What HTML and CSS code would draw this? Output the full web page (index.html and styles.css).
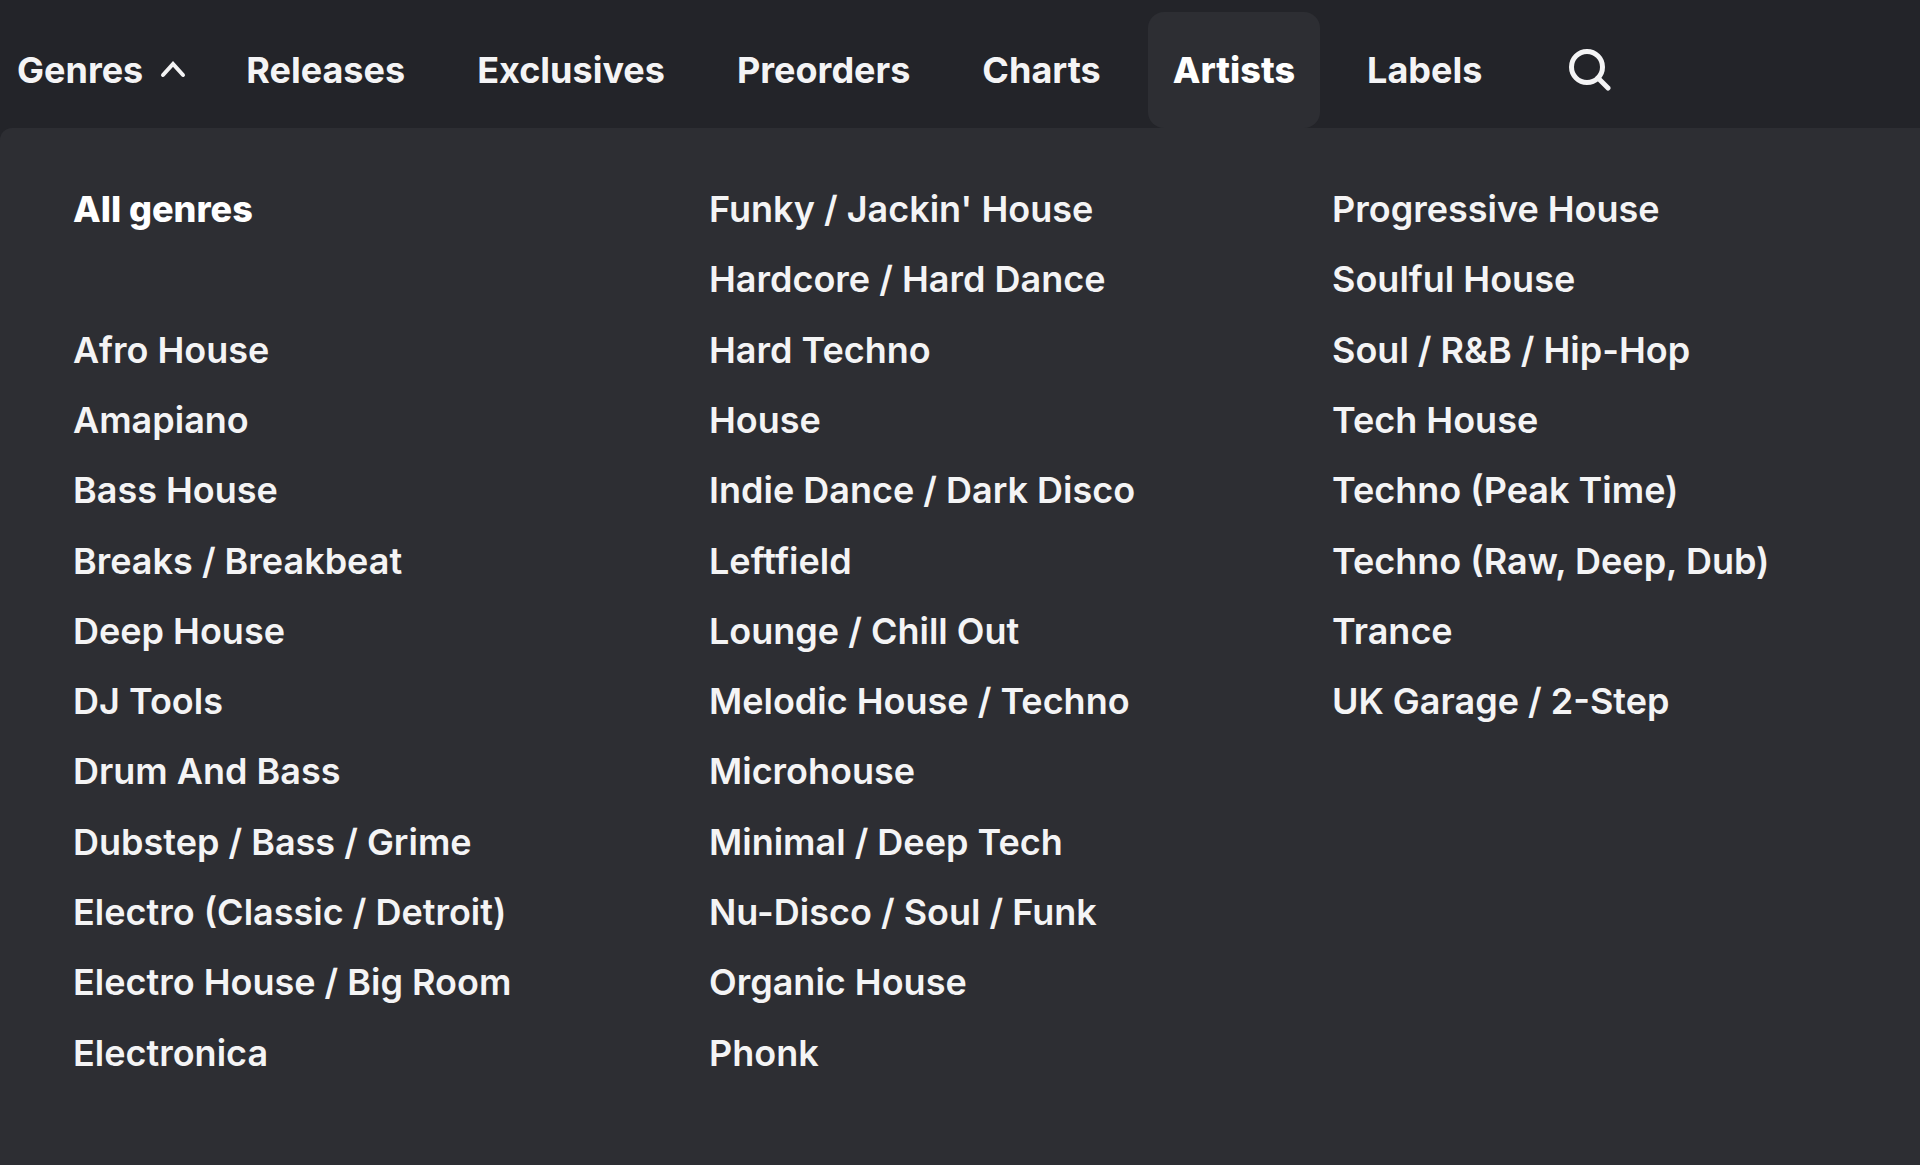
FILE: index.html
```html
<!DOCTYPE html>
<html lang="en">
<head>
    <meta charset="UTF-8">
    <meta name="viewport" content="width=device-width, initial-scale=1.0">
    <title>Genres</title>
    <link rel="stylesheet" href="styles.css">
</head>
<body>
    <header>
        <nav class="main-nav">
            <button type="button" class="nav-item genres-toggle" aria-expanded="true">
                Genres
                <svg class="chevron" viewBox="0 0 26 18" aria-hidden="true"><path d="M3 14 L13 3 L23 14"/></svg>
            </button>
            <a class="nav-item" href="#">Releases</a>
            <a class="nav-item" href="#">Exclusives</a>
            <a class="nav-item" href="#">Preorders</a>
            <a class="nav-item" href="#">Charts</a>
            <a class="nav-item active" href="#">Artists</a>
            <a class="nav-item" href="#">Labels</a>
            <button type="button" class="search" aria-label="Search">
                <svg viewBox="0 0 42 42" aria-hidden="true"><circle cx="18" cy="18" r="15.5"/><path d="M29 29 L39 39"/></svg>
            </button>
        </nav>
    </header>

    <main class="genre-menu">
        <ul>
            <li class="all"><a href="#">All genres</a></li>
            <li><a href="#">Afro House</a></li>
            <li><a href="#">Amapiano</a></li>
            <li><a href="#">Bass House</a></li>
            <li><a href="#">Breaks / Breakbeat</a></li>
            <li><a href="#">Deep House</a></li>
            <li><a href="#">DJ Tools</a></li>
            <li><a href="#">Drum And Bass</a></li>
            <li><a href="#">Dubstep / Bass / Grime</a></li>
            <li><a href="#">Electro (Classic / Detroit)</a></li>
            <li><a href="#">Electro House / Big Room</a></li>
            <li><a href="#">Electronica</a></li>
        </ul>
        <ul>
            <li><a href="#">Funky / Jackin' House</a></li>
            <li><a href="#">Hardcore / Hard Dance</a></li>
            <li><a href="#">Hard Techno</a></li>
            <li><a href="#">House</a></li>
            <li><a href="#">Indie Dance / Dark Disco</a></li>
            <li><a href="#">Leftfield</a></li>
            <li><a href="#">Lounge / Chill Out</a></li>
            <li><a href="#">Melodic House / Techno</a></li>
            <li><a href="#">Microhouse</a></li>
            <li><a href="#">Minimal / Deep Tech</a></li>
            <li><a href="#">Nu-Disco / Soul / Funk</a></li>
            <li><a href="#">Organic House</a></li>
            <li><a href="#">Phonk</a></li>
        </ul>
        <ul>
            <li><a href="#">Progressive House</a></li>
            <li><a href="#">Soulful House</a></li>
            <li><a href="#">Soul / R&amp;B / Hip-Hop</a></li>
            <li><a href="#">Tech House</a></li>
            <li><a href="#">Techno (Peak Time)</a></li>
            <li><a href="#">Techno (Raw, Deep, Dub)</a></li>
            <li><a href="#">Trance</a></li>
            <li><a href="#">UK Garage / 2-Step</a></li>
        </ul>
    </main>
</body>
</html>
```

FILE: styles.css
```css
* {
    box-sizing: border-box;
}
body {
    display: flex;
    flex-direction: column;
    min-height: 100vh;
    margin: 0;
    background-color: #232429;
    color: #f4f4f5;
    font-family: Inter, sans-serif;
    font-size: 36px;
    font-weight: 600;
}
a {
    color: inherit;
    text-decoration: none;
}
button {
    background: none;
    border: none;
    color: inherit;
    font: inherit;
    cursor: pointer;
}
svg {
    fill: none;
    stroke: currentColor;
    stroke-linecap: round;
}
.main-nav {
    display: flex;
    padding-top: 12px;
    font-weight: 700;
}
.nav-item {
    padding: 0 25px;
    margin-right: 22px;
    border-radius: 16px;
    line-height: 116px;
}
.genres-toggle {
    display: flex;
    align-items: center;
    gap: 17px;
    padding: 0 13px 0 17px;
}
.chevron {
    width: 26px;
    height: 18px;
    stroke-width: 4;
}
.active {
    background-color: #2d2e33;
    color: #fff;
    font-weight: 800;
}
.search {
    margin-left: 40px;
    padding: 0;
}
.search svg {
    display: block;
    width: 42px;
    height: 42px;
    stroke-width: 5;
}
.genre-menu {
    flex: 1;
    display: grid;
    grid-template-columns: 636fr 623fr 588fr;
    padding: 46px 0 77px 73px;
    background-color: #2d2e33;
    border-top-left-radius: 12px;
}
ul {
    display: grid;
    grid-template-rows: repeat(13, 1fr);
    list-style: none;
    margin: 0;
    padding: 0;
}
li {
    line-height: 70px;
}
.all {
    grid-row: span 2;
    color: #fff;
    font-weight: 800;
}
```
